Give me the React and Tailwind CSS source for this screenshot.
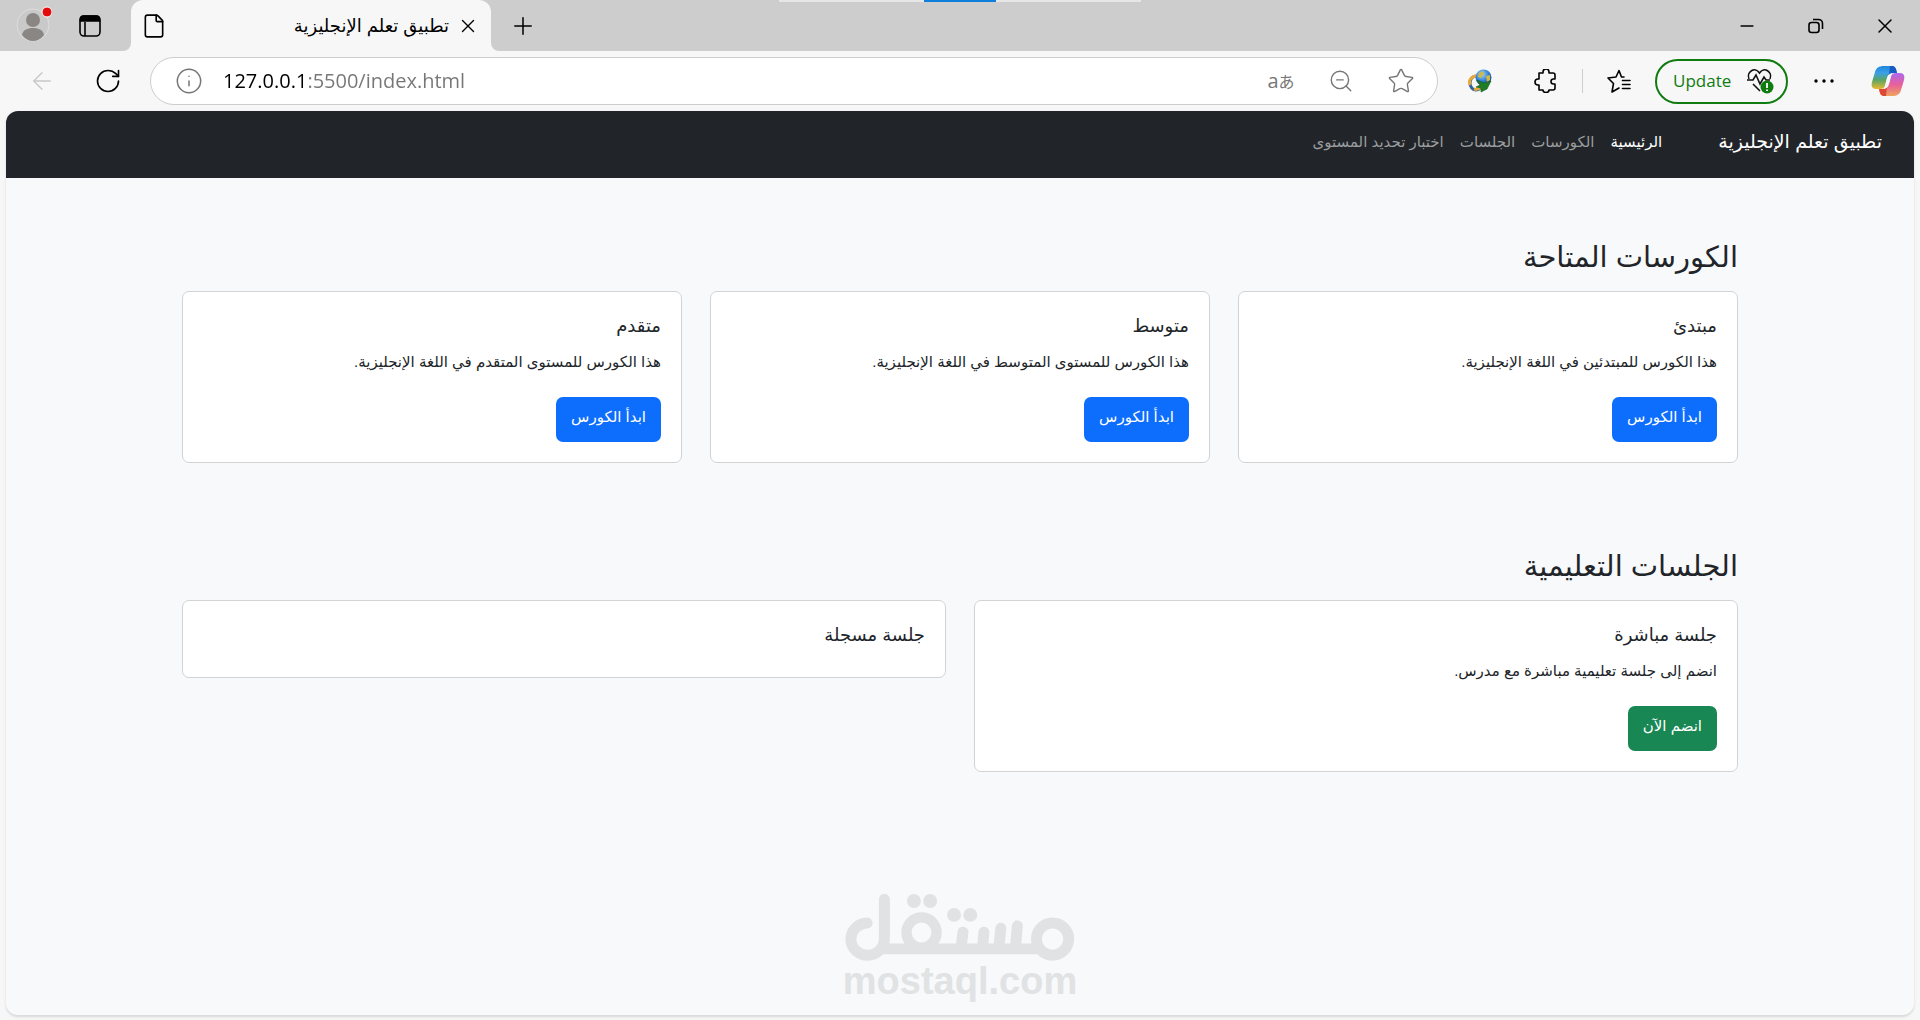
import React from 'react';
import { Minus, X, Plus, ArrowLeft, RotateCw, Info, ZoomOut, Star, File } from 'lucide-react';

const navLinks = [
  { label: 'الرئيسية', href: '#home', active: true },
  { label: 'الكورسات', href: '#courses' },
  { label: 'الجلسات', href: '#sessions' },
  { label: 'اختبار تحديد المستوى', href: '#test' },
];

const courses = [
  { title: 'مبتدئ', desc: 'هذا الكورس للمبتدئين في اللغة الإنجليزية.' },
  { title: 'متوسط', desc: 'هذا الكورس للمستوى المتوسط في اللغة الإنجليزية.' },
  { title: 'متقدم', desc: 'هذا الكورس للمستوى المتقدم في اللغة الإنجليزية.' },
];

function IconButton({ label, className = '', children }) {
  return (
    <button type="button" aria-label={label} className={`flex shrink-0 items-center justify-center ${className}`}>
      {children}
    </button>
  );
}

function ProfileIcon() {
  return (
    <svg className="h-9 w-9" viewBox="0 0 36 36">
      <circle cx="17" cy="19" r="16" fill="#c9c9c9" stroke="#dedede" />
      <circle cx="17" cy="14" r="7" fill="#8a8683" />
      <path d="M6 29c1-5 5-7 11-7s10 2 11 7c-3 4-7 6-11 6s-8-2-11-6z" fill="#8a8683" />
      <circle cx="31" cy="6" r="5" fill="#e30b0b" stroke="#fff" />
    </svg>
  );
}

function TabsIcon() {
  return (
    <svg className="h-6 w-6" viewBox="0 0 24 24" fill="none" stroke="#000" strokeWidth="1.6">
      <rect x="2" y="2" width="20" height="20" rx="4" />
      <path d="M2.5 7V5a3 3 0 0 1 3-3h13a3 3 0 0 1 3 3v2z" fill="#000" />
      <path d="M7 8v14" />
    </svg>
  );
}

function RestoreIcon() {
  return (
    <svg className="h-4 w-4" viewBox="0 0 16 16" fill="none" stroke="#000" strokeWidth="1.6">
      <rect x="1" y="4.5" width="10" height="10" rx="2.5" />
      <path d="M5 1.5h5.5a4 4 0 0 1 4 4V11" />
    </svg>
  );
}

function GlobeIcon() {
  return (
    <svg className="h-6 w-6" viewBox="0 0 24 24">
      <defs>
        <radialGradient id="globe" cx=".4" cy=".3" r=".8">
          <stop offset="0" stopColor="#a9dcf7" />
          <stop offset=".5" stopColor="#3182d2" />
          <stop offset="1" stopColor="#123e7c" />
        </radialGradient>
      </defs>
      <ellipse cx="8" cy="14" rx="6" ry="7" fill="none" stroke="#32659b" strokeWidth="3" />
      <path d="M2 16C0 11 4 7 9 7M6 20c4 1 6-1 7-4" fill="none" stroke="#e9a936" strokeWidth="3" />
      <circle cx="15.5" cy="8.5" r="8" fill="url(#globe)" />
      <path d="M11 4l4-2 1 3-3 4-3-1zM18 7l4-1v5l-3 2z" fill="#d2b64a" />
      <path d="M9 11l7 3 7-2-4 8-6 3v-4l-5-1 4-2z" fill="#1f7d28" stroke="#125a1b" strokeWidth=".6" />
    </svg>
  );
}

function PuzzleIcon() {
  return (
    <svg className="h-6 w-6" viewBox="0 0 24 24" fill="none" stroke="#000" strokeWidth="1.6" strokeLinejoin="round">
      <path d="M5 4h4V3a3 3 0 0 1 6 0v1h4a2 2 0 0 1 2 2v4h-1.500a2.500 2.500 0 0 0 0 5H21v4a2 2 0 0 1-2 2h-4a3 2.500 0 0 1-6 0H5v-5H4a2.800 2.800 0 0 1 0-6h1z" />
    </svg>
  );
}

function FavoritesIcon() {
  return (
    <svg className="h-6 w-6" viewBox="0 0 24 24" fill="none" stroke="#000" strokeWidth="1.6" strokeLinecap="round" strokeLinejoin="round">
      <path d="M17 8h-2.500L12 1.500 9 8l-8 1 5.500 5.500L5 23l7-4" />
      <path d="M15.500 11.500H23M15.500 15.500H23M15.500 19.500H23" />
    </svg>
  );
}

function HeartIcon() {
  return (
    <svg className="h-7 w-7" viewBox="0 0 28 28" fill="none" stroke="#111" strokeWidth="1.6">
      <path d="M3 12C0 5 9-1 13.500 6 18-1 27 5 24 12M7 17l7 7" />
      <path d="M1 13h6l3-5 4 9 4-7 2 3h4" />
      <circle cx="21" cy="20" r="6.5" fill="#107c10" stroke="none" />
      <path d="M21 16v5M21 22.500v1.500" stroke="#fff" strokeWidth="1.8" />
    </svg>
  );
}

function CopilotIcon() {
  return (
    <svg className="h-8 w-9" viewBox="0 0 36 32">
      <defs>
        <linearGradient id="copilotLeft" x1="0" y1="0" x2="0" y2="1">
          <stop offset="0" stopColor="#1f86de" />
          <stop offset=".3" stopColor="#3a9fe8" />
          <stop offset=".6" stopColor="#58a566" />
          <stop offset="1" stopColor="#e9b82f" />
        </linearGradient>
        <linearGradient id="copilotRight" x1="0" y1="1" x2="0" y2="0">
          <stop offset="0" stopColor="#ad69ed" />
          <stop offset=".5" stopColor="#e85f9c" />
          <stop offset="1" stopColor="#efa45c" />
        </linearGradient>
      </defs>
      <path d="M14 1h8c3 0 4 2 5 7h-4c-3 0-5 2-6 5l-2 8c-1 2-2 3-5 3H6c-4 0-5-3-4-7l3-10c1-4 4-6 9-6z" fill="url(#copilotLeft)" />
      <path d="M20 1h2c3 0 4 2 5 7h-4l-4 2z" fill="#185bc2" />
      <g transform="rotate(180 18 16)">
        <path d="M14 1h8c3 0 4 2 5 7h-4c-3 0-5 2-6 5l-2 8c-1 2-2 3-5 3H6c-4 0-5-3-4-7l3-10c1-4 4-6 9-6z" fill="url(#copilotRight)" />
        <path d="M20 1h2c3 0 4 2 5 7h-4l-4 2z" fill="#dd4936" />
      </g>
      <path d="M23 8c-3 0-5 2-6 5l-2 8c-1 2-1 3-2 3 3 0 5-2 6-5l2-8c1-2 1-3 2-3z" fill="#f7f7f7" />
    </svg>
  );
}

function MostaqlLogo() {
  return (
    <svg className="h-[67px] w-[230px]" viewBox="75 72 690 202" fill="none" stroke="#e1e2e4" strokeWidth="33" role="img" aria-label="مستقل">
      <path d="M180 237.500H665" />
      <circle cx="699" cy="208" r="48.5" />
      <circle cx="304" cy="188" r="45.5" strokeWidth="31" />
      <g strokeLinecap="round">
        <path d="M593 168l-6 66M543 175l-6 59M492 187l-4 47M429 187l-6 47" />
        <path d="M192 88V208A50.500 48.500 0 1 1 140 159.500" />
      </g>
      <g fill="#e1e2e4" stroke="none">
        <circle cx="281" cy="93" r="21" />
        <circle cx="330" cy="93" r="21" />
        <circle cx="402" cy="135" r="21" />
        <circle cx="451" cy="135" r="21" />
      </g>
    </svg>
  );
}

function TabStrip() {
  return (
    <div className="relative flex h-[51px]">
      <div className="flex w-[131px] shrink-0 items-center gap-[26px] rounded-br-lg bg-[#cdcdcd] pl-4">
        <IconButton label="Profile" className="mb-1"><ProfileIcon /></IconButton>
        <IconButton label="Tab actions"><TabsIcon /></IconButton>
      </div>
      <div className="w-[360px] shrink-0 bg-[#cdcdcd]">
        <div className="flex h-full items-center rounded-t-xl bg-[#f7f7f7] pl-2.5 pr-3">
          <File className="h-[26px] w-[26px]" strokeWidth={1.5} />
          <span dir="rtl" className="ml-auto mr-2 text-lg">تطبيق تعلم الإنجليزية</span>
          <IconButton label="Close tab"><X className="h-[22px] w-[22px]" strokeWidth={1.5} /></IconButton>
        </div>
      </div>
      <div className="flex flex-1 items-center rounded-bl-lg bg-[#cdcdcd] pl-[18px] pr-[23px]">
        <IconButton label="New tab"><Plus className="h-7 w-7" strokeWidth={1.3} /></IconButton>
        <div className="ml-auto flex items-center gap-[45px]">
          <IconButton label="Minimize" className="w-6"><Minus className="h-5 w-5" strokeWidth={2} /></IconButton>
          <IconButton label="Restore" className="w-6"><RestoreIcon /></IconButton>
          <IconButton label="Close" className="w-6"><X className="h-6 w-6" strokeWidth={1.5} /></IconButton>
        </div>
      </div>
      <div className="absolute left-1/2 top-0 flex h-0.5 w-[362px] -translate-x-1/2 justify-center bg-[#e6e6e6]">
        <div className="w-[72px] bg-[#0f7fdb]" />
      </div>
    </div>
  );
}

function Toolbar() {
  return (
    <div className="flex h-[60px] items-center pl-7 pr-3.5">
      <IconButton label="Back"><ArrowLeft className="h-7 w-7 text-[#c8c8c8]" strokeWidth={1.2} /></IconButton>
      <IconButton label="Refresh" className="ml-[38px]"><RotateCw className="h-7 w-7" strokeWidth={1.4} /></IconButton>
      <div className="ml-7 flex h-12 flex-1 items-center rounded-full border border-[#cdcdcd] bg-white pl-6 pr-[22px] text-[#767676]">
        <Info className="h-7 w-7 shrink-0" strokeWidth={1.3} />
        <input
          type="text"
          aria-label="Address"
          defaultValue="127.0.0.1:5500/index.html"
          className="ml-5 min-w-0 flex-1 bg-[linear-gradient(90deg,#000_83px,#767676_83px)] bg-clip-text font-['Open_Sans',sans-serif] text-[20px] text-transparent outline-none"
        />
        <div className="flex items-center gap-8">
          <IconButton label="Translate" className="w-7 items-baseline">
            <span className="font-['Open_Sans',sans-serif] text-xl">a</span>
            <span className="font-['Noto_Sans_CJK_JP',sans-serif] text-base">あ</span>
          </IconButton>
          <IconButton label="Zoom" className="w-7"><ZoomOut className="h-[26px] w-[26px]" strokeWidth={1.3} /></IconButton>
          <IconButton label="Add to favorites"><Star className="h-7 w-7" strokeWidth={1.2} /></IconButton>
        </div>
      </div>
      <div className="ml-[30px] flex items-center">
        <IconButton label="Download manager"><GlobeIcon /></IconButton>
        <IconButton label="Extensions" className="ml-[42px]"><PuzzleIcon /></IconButton>
        <div className="ml-6 h-6 w-px bg-[#cdcdcd]" />
        <IconButton label="Favorites" className="ml-6"><FavoritesIcon /></IconButton>
        <button type="button" className="ml-6 flex h-[45px] w-[133px] items-center justify-between rounded-full border-2 border-[#107c10] pl-4 pr-3 font-['Open_Sans',sans-serif] text-[17px] text-[#107c10]">
          Update
          <HeartIcon />
        </button>
        <IconButton label="Settings" className="ml-6">
          <svg className="h-6 w-6" viewBox="0 0 24 24">
            <circle cx="4" cy="12" r="1.7" />
            <circle cx="12" cy="12" r="1.7" />
            <circle cx="20" cy="12" r="1.7" />
          </svg>
        </IconButton>
        <IconButton label="Copilot" className="ml-[34px]"><CopilotIcon /></IconButton>
      </div>
    </div>
  );
}

function Card({ title, desc, action, color }) {
  return (
    <div className="rounded-[7px] border border-[#d2d3d4] bg-white p-5">
      <h5 className="pb-2 text-lg leading-7">{title}</h5>
      {desc && <p className="text-[15px] leading-7">{desc}</p>}
      {action && (
        <button type="button" className={`mt-[21px] h-[45px] rounded-[7px] px-[15px] pb-1 text-[15px] text-white ${color}`}>
          {action}
        </button>
      )}
    </div>
  );
}

function Navbar() {
  return (
    <nav className="flex h-[67px] items-center bg-[#212529] px-8 pb-1">
      <a href="#home" className="text-[19px] text-white">تطبيق تعلم الإنجليزية</a>
      <ul className="mr-14 flex gap-4 text-[15px]">
        {navLinks.map((link) => (
          <li key={link.href}>
            <a href={link.href} className={link.active ? 'text-white' : 'text-[#9b9d9f]'}>{link.label}</a>
          </li>
        ))}
      </ul>
    </nav>
  );
}

export default function App() {
  return (
    <div className="flex min-h-screen flex-col bg-[#f7f7f7] font-['Liberation_Sans','DejaVu_Sans',sans-serif] text-black">
      <TabStrip />
      <Toolbar />

      <div dir="rtl" lang="ar" className="mx-1.5 mb-1 flex flex-1 flex-col overflow-hidden rounded-xl border-b border-[#dcdcdc] bg-[#f8f9fa] text-[#212529] shadow-sm">
        <Navbar />

        <main className="mx-auto w-full max-w-[1556px]">
          <section id="courses" className="pt-14">
            <h2 className="mb-2.5 text-[29px] leading-[47px]">الكورسات المتاحة</h2>
            <div className="grid grid-cols-3 gap-7">
              {courses.map((course) => (
                <Card key={course.title} {...course} action="ابدأ الكورس" color="bg-[#0d6efd]" />
              ))}
            </div>
          </section>

          <section id="sessions" className="pt-20">
            <h2 className="mb-2.5 text-[29px] leading-[47px]">الجلسات التعليمية</h2>
            <div className="grid grid-cols-2 items-start gap-7">
              <Card title="جلسة مباشرة" desc="انضم إلى جلسة تعليمية مباشرة مع مدرس." action="انضم الآن" color="bg-[#198754]" />
              <Card title="جلسة مسجلة" />
            </div>
          </section>
        </main>

        <footer className="mt-auto flex flex-col items-center pb-3.5 pt-8">
          <MostaqlLogo />
          <span dir="ltr" className="text-[38px] font-bold leading-10 text-[#e1e2e4]">mostaql.com</span>
        </footer>
      </div>
    </div>
  );
}
